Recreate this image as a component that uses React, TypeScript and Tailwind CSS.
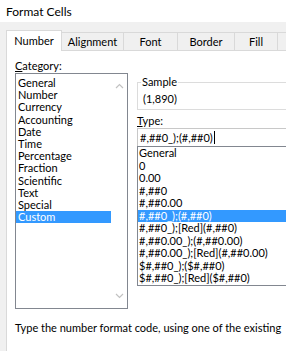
import React from "react";

const categories = [
  "General",
  "Number",
  "Currency",
  "Accounting",
  "Date",
  "Time",
  "Percentage",
  "Fraction",
  "Scientific",
  "Text",
  "Special",
  "Custom",
];

const types = [
  "General",
  "0",
  "0.00",
  "#,##0",
  "#,##0.00",
  "#,##0_);(#,##0)",
  "#,##0_);[Red](#,##0)",
  "#,##0.00_);(#,##0.00)",
  "#,##0.00_);[Red](#,##0.00)",
  "$#,##0_);($#,##0)",
  "$#,##0_);[Red]($#,##0)",
];

function Chevron({ up }: { up?: boolean }) {
  return (
    <svg width="9" height="6" viewBox="0 0 9 6" className="block">
      <path
        d={up ? "M1 5 L4.5 1.5 L8 5" : "M1 1 L4.5 4.5 L8 1"}
        fill="none"
        stroke="#c2c2c2"
        strokeWidth="1.2"
      />
    </svg>
  );
}

export default function App() {
  return (
    <div className="w-[286px] h-[351px] overflow-hidden bg-[#f0f0f0] text-[11px] text-black font-['Lato',sans-serif]">
      <div className="h-[22px] bg-white pl-[6px] pt-[4px] leading-[16px] text-[12px]">Format Cells</div>
      <div className="w-[440px] pl-[6px] pt-[8px]">
        <div className="flex items-end h-[21px] relative z-10">
          <div className="w-[56px] h-[21px] bg-white border border-b-0 border-[#d9d9d9] flex items-center justify-center leading-[14px]">
            Number
          </div>
          <div className="w-[62px] h-[19px] border-t border-r border-[#d9d9d9] flex items-center justify-center leading-[14px]">
            Alignment
          </div>
          <div className="w-[54px] h-[19px] border-t border-r border-[#d9d9d9] flex items-center justify-center leading-[14px]">
            Font
          </div>
          <div className="w-[57px] h-[19px] border-t border-r border-[#d9d9d9] flex items-center justify-center leading-[14px]">
            Border
          </div>
          <div className="w-[43px] h-[19px] border-t border-r border-[#d9d9d9] flex items-center justify-center leading-[14px]">
            Fill
          </div>
          <div className="w-[70px] h-[19px] border-t border-r border-[#d9d9d9] flex items-center pl-[12px] leading-[14px]">
            Protection
          </div>
        </div>
        <div className="-mt-px bg-white border-l border-t border-[#d9d9d9] h-[320px] pl-[8px] pt-[8px]">
          <div className="flex gap-[9px]">
            <div className="w-[113px] shrink-0">
              <div className="leading-[14px]">
                <span className="underline">C</span>ategory:
              </div>
              <div className="h-[236px] border border-[#828790] flex">
                <div className="w-[95px] pt-[3px]">
                  {categories.map((c) => (
                    <div
                      key={c}
                      className={
                        "leading-[12.2px] h-[12.2px] pl-[2px] whitespace-nowrap " +
                        (c === "Custom" ? "bg-[#3399ff] text-white" : "")
                      }
                    >
                      {c}
                    </div>
                  ))}
                </div>
                <div className="w-[16px] flex flex-col justify-between items-center py-[9px]">
                  <Chevron up />
                  <Chevron />
                </div>
              </div>
              <div className="mt-[12px] leading-[14px] whitespace-nowrap">
                Type the number format code, using one of the existing
              </div>
            </div>
            <div className="w-[300px] shrink-0 pt-[16px]">
              <fieldset className="border border-[#dcdcdc] pl-[5px] pb-[3px]">
                <legend className="-ml-[2px] px-[1px] leading-[14px]">Sample</legend>
                <div className="leading-[14px] mt-[3px]">(1,890)</div>
              </fieldset>
              <div className="mt-[4px] leading-[14px]">
                <span className="underline">T</span>ype:
              </div>
              <div className="h-[18px] border border-b-0 border-[#c8c8c8] pl-[2px] flex items-center leading-[14px] whitespace-nowrap">
                #,##0_);(#,##0)
                <span className="inline-block w-px h-[13px] bg-black ml-[1px]" />
              </div>
              <div className="h-[140px] border border-[#828790]">
                {types.map((t, i) => (
                  <div
                    key={t}
                    className={
                      "leading-[12.5px] h-[12.5px] pl-[1px] whitespace-nowrap " +
                      (i === 5 ? "bg-[#3399ff] text-white" : "")
                    }
                  >
                    {t}
                  </div>
                ))}
              </div>
            </div>
          </div>
        </div>
      </div>
    </div>
  );
}
